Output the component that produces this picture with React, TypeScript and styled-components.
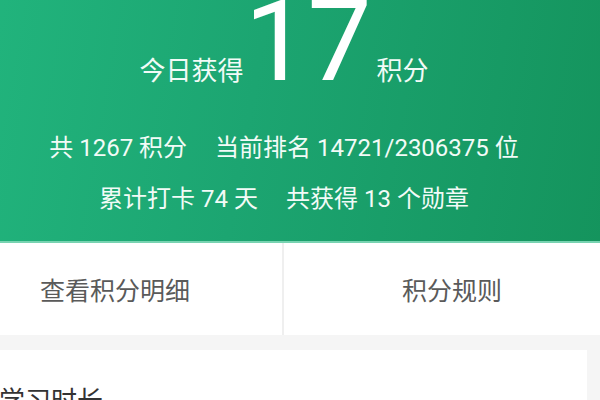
import styled, { createGlobalStyle } from "styled-components";

const GlobalStyle = createGlobalStyle`
  html, body {
    margin: 0;
    padding: 0;
    overflow: hidden;
    background: #f5f5f5;
  }
`;

const stats = [
  ["共 1267 积分", "当前排名 14721/2306375 位"],
  ["累计打卡 74 天", "共获得 13 个勋章"],
];

export default function App() {
  return (
    <>
      <GlobalStyle />
      <Screen>
        <Header>
          <TodayRow>
            <Label>今日获得</Label>
            <BigNumber>17</BigNumber>
            <Label>积分</Label>
          </TodayRow>
          {stats.map((line, i) => (
            <StatLine key={i} first={i === 0}>
              {line.map((s) => (
                <span key={s}>{s}</span>
              ))}
            </StatLine>
          ))}
        </Header>
        <ActionBar>
          <ActionButton divider>查看积分明细</ActionButton>
          <ActionButton>积分规则</ActionButton>
        </ActionBar>
        <Card>
          <CardTitle>学习时长</CardTitle>
        </Card>
      </Screen>
    </>
  );
}

const Screen = styled.div`
  width: 672px;
  margin-left: -52px;
  font-family: Roboto, "Noto Sans CJK SC", sans-serif;
`;

const Header = styled.div`
  height: 241px;
  background: linear-gradient(100deg, #22b67e 0%, #1ca571 45%, #14935c 100%);
  border-bottom: 2px solid #78d3b1;
  display: flex;
  flex-direction: column;
  align-items: center;
  color: #f2fbf7;
  overflow: hidden;
`;

const TodayRow = styled.div`
  display: flex;
  align-items: baseline;
  height: 86px;
`;

const Label = styled.span`
  font-size: 26px;
  line-height: 30px;
`;

const BigNumber = styled.span`
  font-size: 114px;
  font-weight: 400;
  line-height: 82px;
  color: #ffffff;
  margin: 0 6px 0 1px;
  letter-spacing: -1px;
`;

const StatLine = styled.div<{ first?: boolean }>`
  display: flex;
  gap: 28px;
  font-size: 24px;
  line-height: 30px;
  margin-top: ${(p) => (p.first ? "47px" : "21px")};
`;

const ActionBar = styled.div`
  display: grid;
  grid-template-columns: 1fr 1fr;
  height: 92px;
  background: #ffffff;
`;

const ActionButton = styled.div<{ divider?: boolean }>`
  display: flex;
  align-items: center;
  justify-content: center;
  font-size: 25px;
  color: #5a5a5a;
  border-right: ${(p) => (p.divider ? "2px solid #efefef" : "none")};
`;

const Card = styled.div`
  margin: 15px 33px 0;
  height: 120px;
  background: #ffffff;
  padding: 30px 18px 0;
`;

const CardTitle = styled.div`
  font-size: 26px;
  color: #333333;
`;
